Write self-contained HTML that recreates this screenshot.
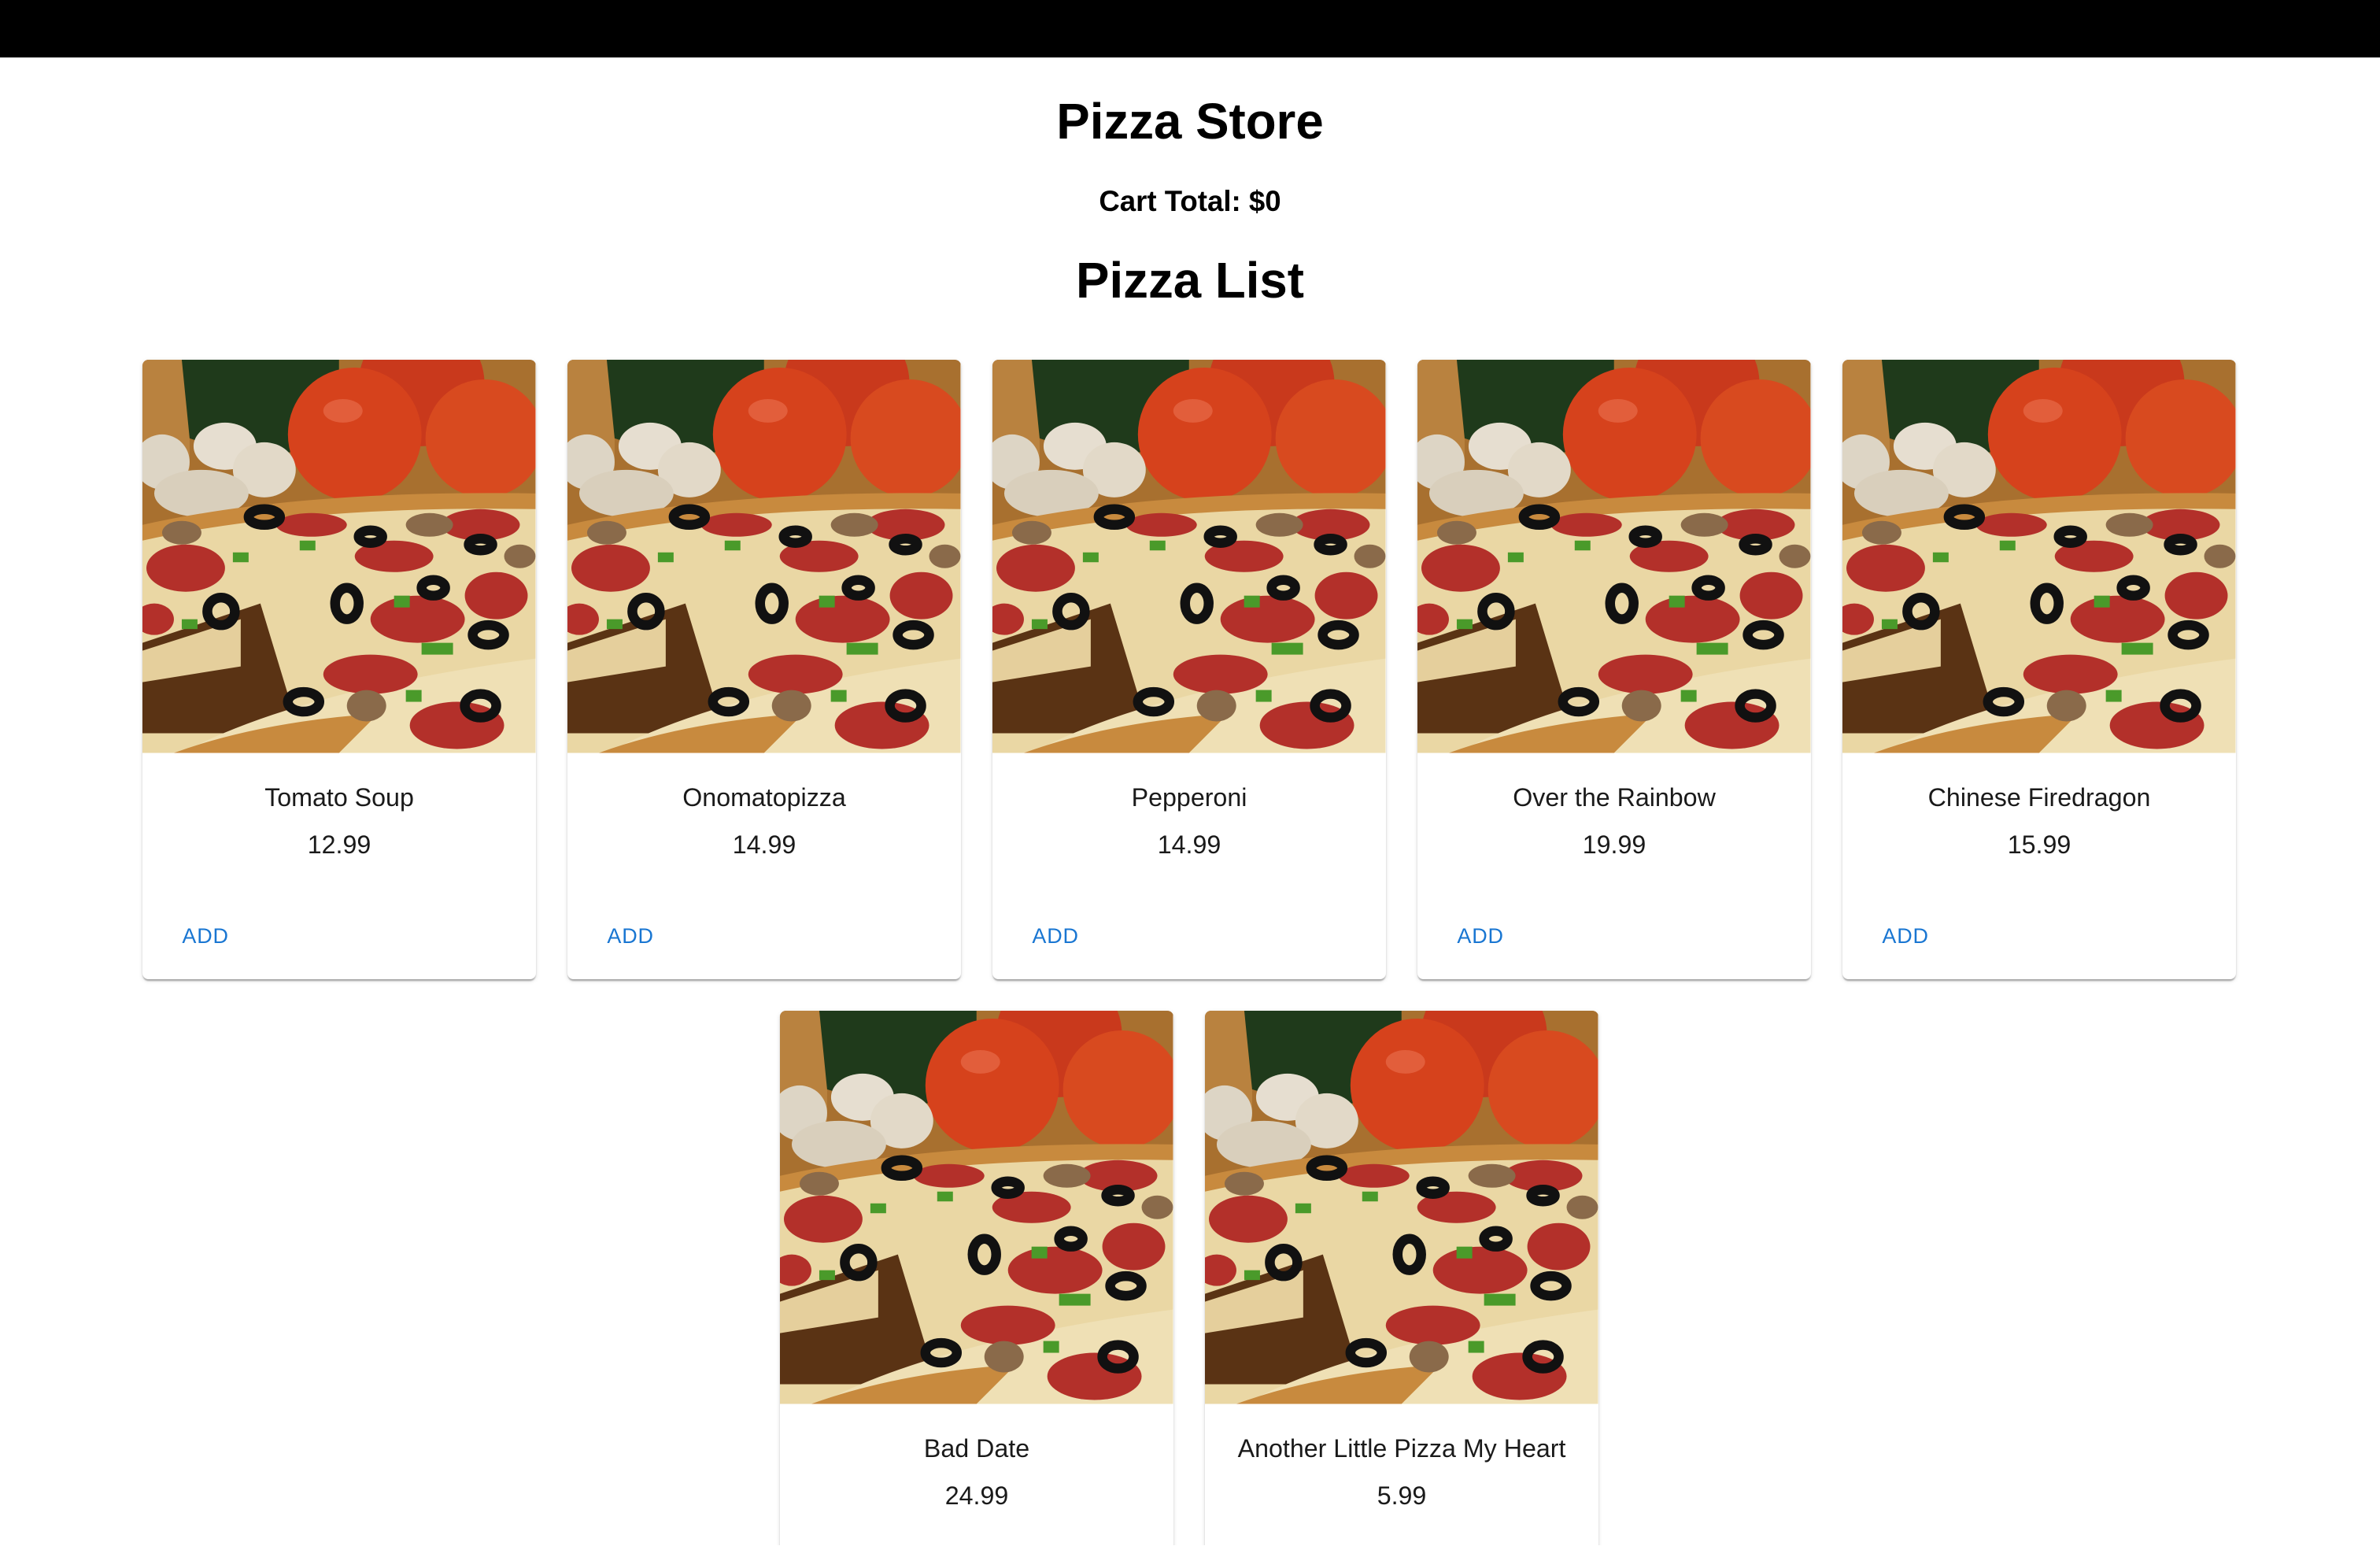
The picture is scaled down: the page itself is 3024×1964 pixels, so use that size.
<!DOCTYPE html>
<html><head><meta charset="utf-8"><style>
html,body{margin:0;padding:0;background:#fff;overflow:hidden}
body{width:3024px;height:1964px}
#root{zoom:1.92857;width:1568px;height:1018px;position:relative;overflow:hidden;font-family:"Liberation Sans",Arial,sans-serif;color:#000}
.bar{position:absolute;left:0;top:0;width:1568px;height:38px;background:#000}
h1,h2,h3{margin:0;position:absolute;left:0;width:1568px;text-align:center;font-weight:bold}
.card{position:absolute;width:259px;height:408px;background:#fff;border-radius:4px;box-shadow:0 2px 1px -1px rgba(0,0,0,.2),0 1px 1px 0 rgba(0,0,0,.14),0 1px 3px 0 rgba(0,0,0,.12);overflow:hidden}
.card svg{display:block;width:259px;height:259px}
.n{position:absolute;top:279px;left:0;width:259px;text-align:center;font-size:16.7px;color:#1a1a1a}
.p{position:absolute;top:310px;left:0;width:259px;text-align:center;font-size:16.7px;color:#1a1a1a}
.a{position:absolute;top:372px;left:26px;font-size:14px;color:#1976d2;letter-spacing:.4px}
</style></head><body><div id="root">
<div class="bar"></div>
<h1 style="top:61px;font-size:33px">Pizza Store</h1>
<h3 style="top:122px;font-size:19px">Cart Total: $0</h3>
<h2 style="top:166px;font-size:33px">Pizza List</h2>
<svg width="0" height="0" style="position:absolute">
<defs><symbol id="pz" viewBox="0 0 100 100" preserveAspectRatio="none">
<rect width="100" height="100" fill="#a8702f"/>
<rect x="0" y="0" width="12" height="30" fill="#b9823f"/>
<path d="M10 0H50V22Q30 26 12 20Z" fill="#1f3a1b"/>
<circle cx="71" cy="6" r="16" fill="#c9391c"/>
<circle cx="54" cy="19" r="17" fill="#d6421c"/>
<circle cx="87" cy="20" r="15" fill="#d84a1f"/>
<ellipse cx="51" cy="13" rx="5" ry="3" fill="#ee7a5a" opacity=".5"/>
<ellipse cx="5" cy="26" rx="7" ry="7" fill="#ddd5c5"/>
<ellipse cx="21" cy="22" rx="8" ry="6" fill="#e6ded0"/>
<ellipse cx="31" cy="28" rx="8" ry="7" fill="#e2d9c8"/>
<ellipse cx="15" cy="34" rx="12" ry="6" fill="#d9cfbc"/>
<path d="M0 42Q40 33 100 34V100H0Z" fill="#c88a3e"/>
<path d="M0 46Q40 37 100 38V100H0Z" fill="#ead7a4"/>
<path d="M0 72L30 62L40 95H0Z" fill="#5a3314"/>
<path d="M0 74L25 66V78L0 82Z" fill="#e5cf9c"/>
<path d="M10 100Q40 84 100 76V100Z" fill="#efe0b5"/>
<path d="M8 100Q30 92 60 90L50 100Z" fill="#c88a3e"/>
<g fill="#b3302a">
<ellipse cx="11" cy="53" rx="10" ry="6"/><ellipse cx="43" cy="42" rx="9" ry="3"/>
<ellipse cx="64" cy="50" rx="10" ry="4"/><ellipse cx="86" cy="42" rx="10" ry="4"/>
<ellipse cx="70" cy="66" rx="12" ry="6"/><ellipse cx="90" cy="60" rx="8" ry="6"/>
<ellipse cx="58" cy="80" rx="12" ry="5"/><ellipse cx="80" cy="93" rx="12" ry="6"/>
<ellipse cx="3" cy="66" rx="5" ry="4"/></g>
<g fill="none" stroke="#111" stroke-width="2.5">
<ellipse cx="31" cy="40" rx="4" ry="2"/><ellipse cx="20" cy="64" rx="3.5" ry="3.5"/>
<ellipse cx="52" cy="62" rx="3" ry="4"/><ellipse cx="88" cy="70" rx="4" ry="2.5"/>
<ellipse cx="41" cy="87" rx="4" ry="2.5"/><ellipse cx="86" cy="88" rx="4" ry="3"/>
<ellipse cx="58" cy="45" rx="3" ry="1.6"/><ellipse cx="86" cy="47" rx="3" ry="1.5"/>
<ellipse cx="74" cy="58" rx="3" ry="2"/></g>
<g fill="#4a9a2a"><rect x="40" y="46" width="4" height="2.5"/><rect x="23" y="49" width="4" height="2.5"/><rect x="64" y="60" width="4" height="3"/><rect x="71" y="72" width="8" height="3"/><rect x="10" y="66" width="4" height="2.5"/><rect x="67" y="84" width="4" height="3"/></g>
<g fill="#8a6a4a"><ellipse cx="10" cy="44" rx="5" ry="3"/><ellipse cx="73" cy="42" rx="6" ry="3"/><ellipse cx="57" cy="88" rx="5" ry="4"/><ellipse cx="96" cy="50" rx="4" ry="3"/></g>
</symbol></defs></svg>

<div class="card" style="left:94px;top:237px"><svg><use href="#pz"/></svg><div class="n">Tomato Soup</div><div class="p">12.99</div><div class="a">ADD</div></div>
<div class="card" style="left:374px;top:237px"><svg><use href="#pz"/></svg><div class="n">Onomatopizza</div><div class="p">14.99</div><div class="a">ADD</div></div>
<div class="card" style="left:654px;top:237px"><svg><use href="#pz"/></svg><div class="n">Pepperoni</div><div class="p">14.99</div><div class="a">ADD</div></div>
<div class="card" style="left:934px;top:237px"><svg><use href="#pz"/></svg><div class="n">Over the Rainbow</div><div class="p">19.99</div><div class="a">ADD</div></div>
<div class="card" style="left:1214px;top:237px"><svg><use href="#pz"/></svg><div class="n">Chinese Firedragon</div><div class="p">15.99</div><div class="a">ADD</div></div>
<div class="card" style="left:514px;top:666px;height:360px"><svg><use href="#pz"/></svg><div class="n">Bad Date</div><div class="p">24.99</div></div>
<div class="card" style="left:794px;top:666px;height:360px"><svg><use href="#pz"/></svg><div class="n">Another Little Pizza My Heart</div><div class="p">5.99</div></div>
</div></body></html>
